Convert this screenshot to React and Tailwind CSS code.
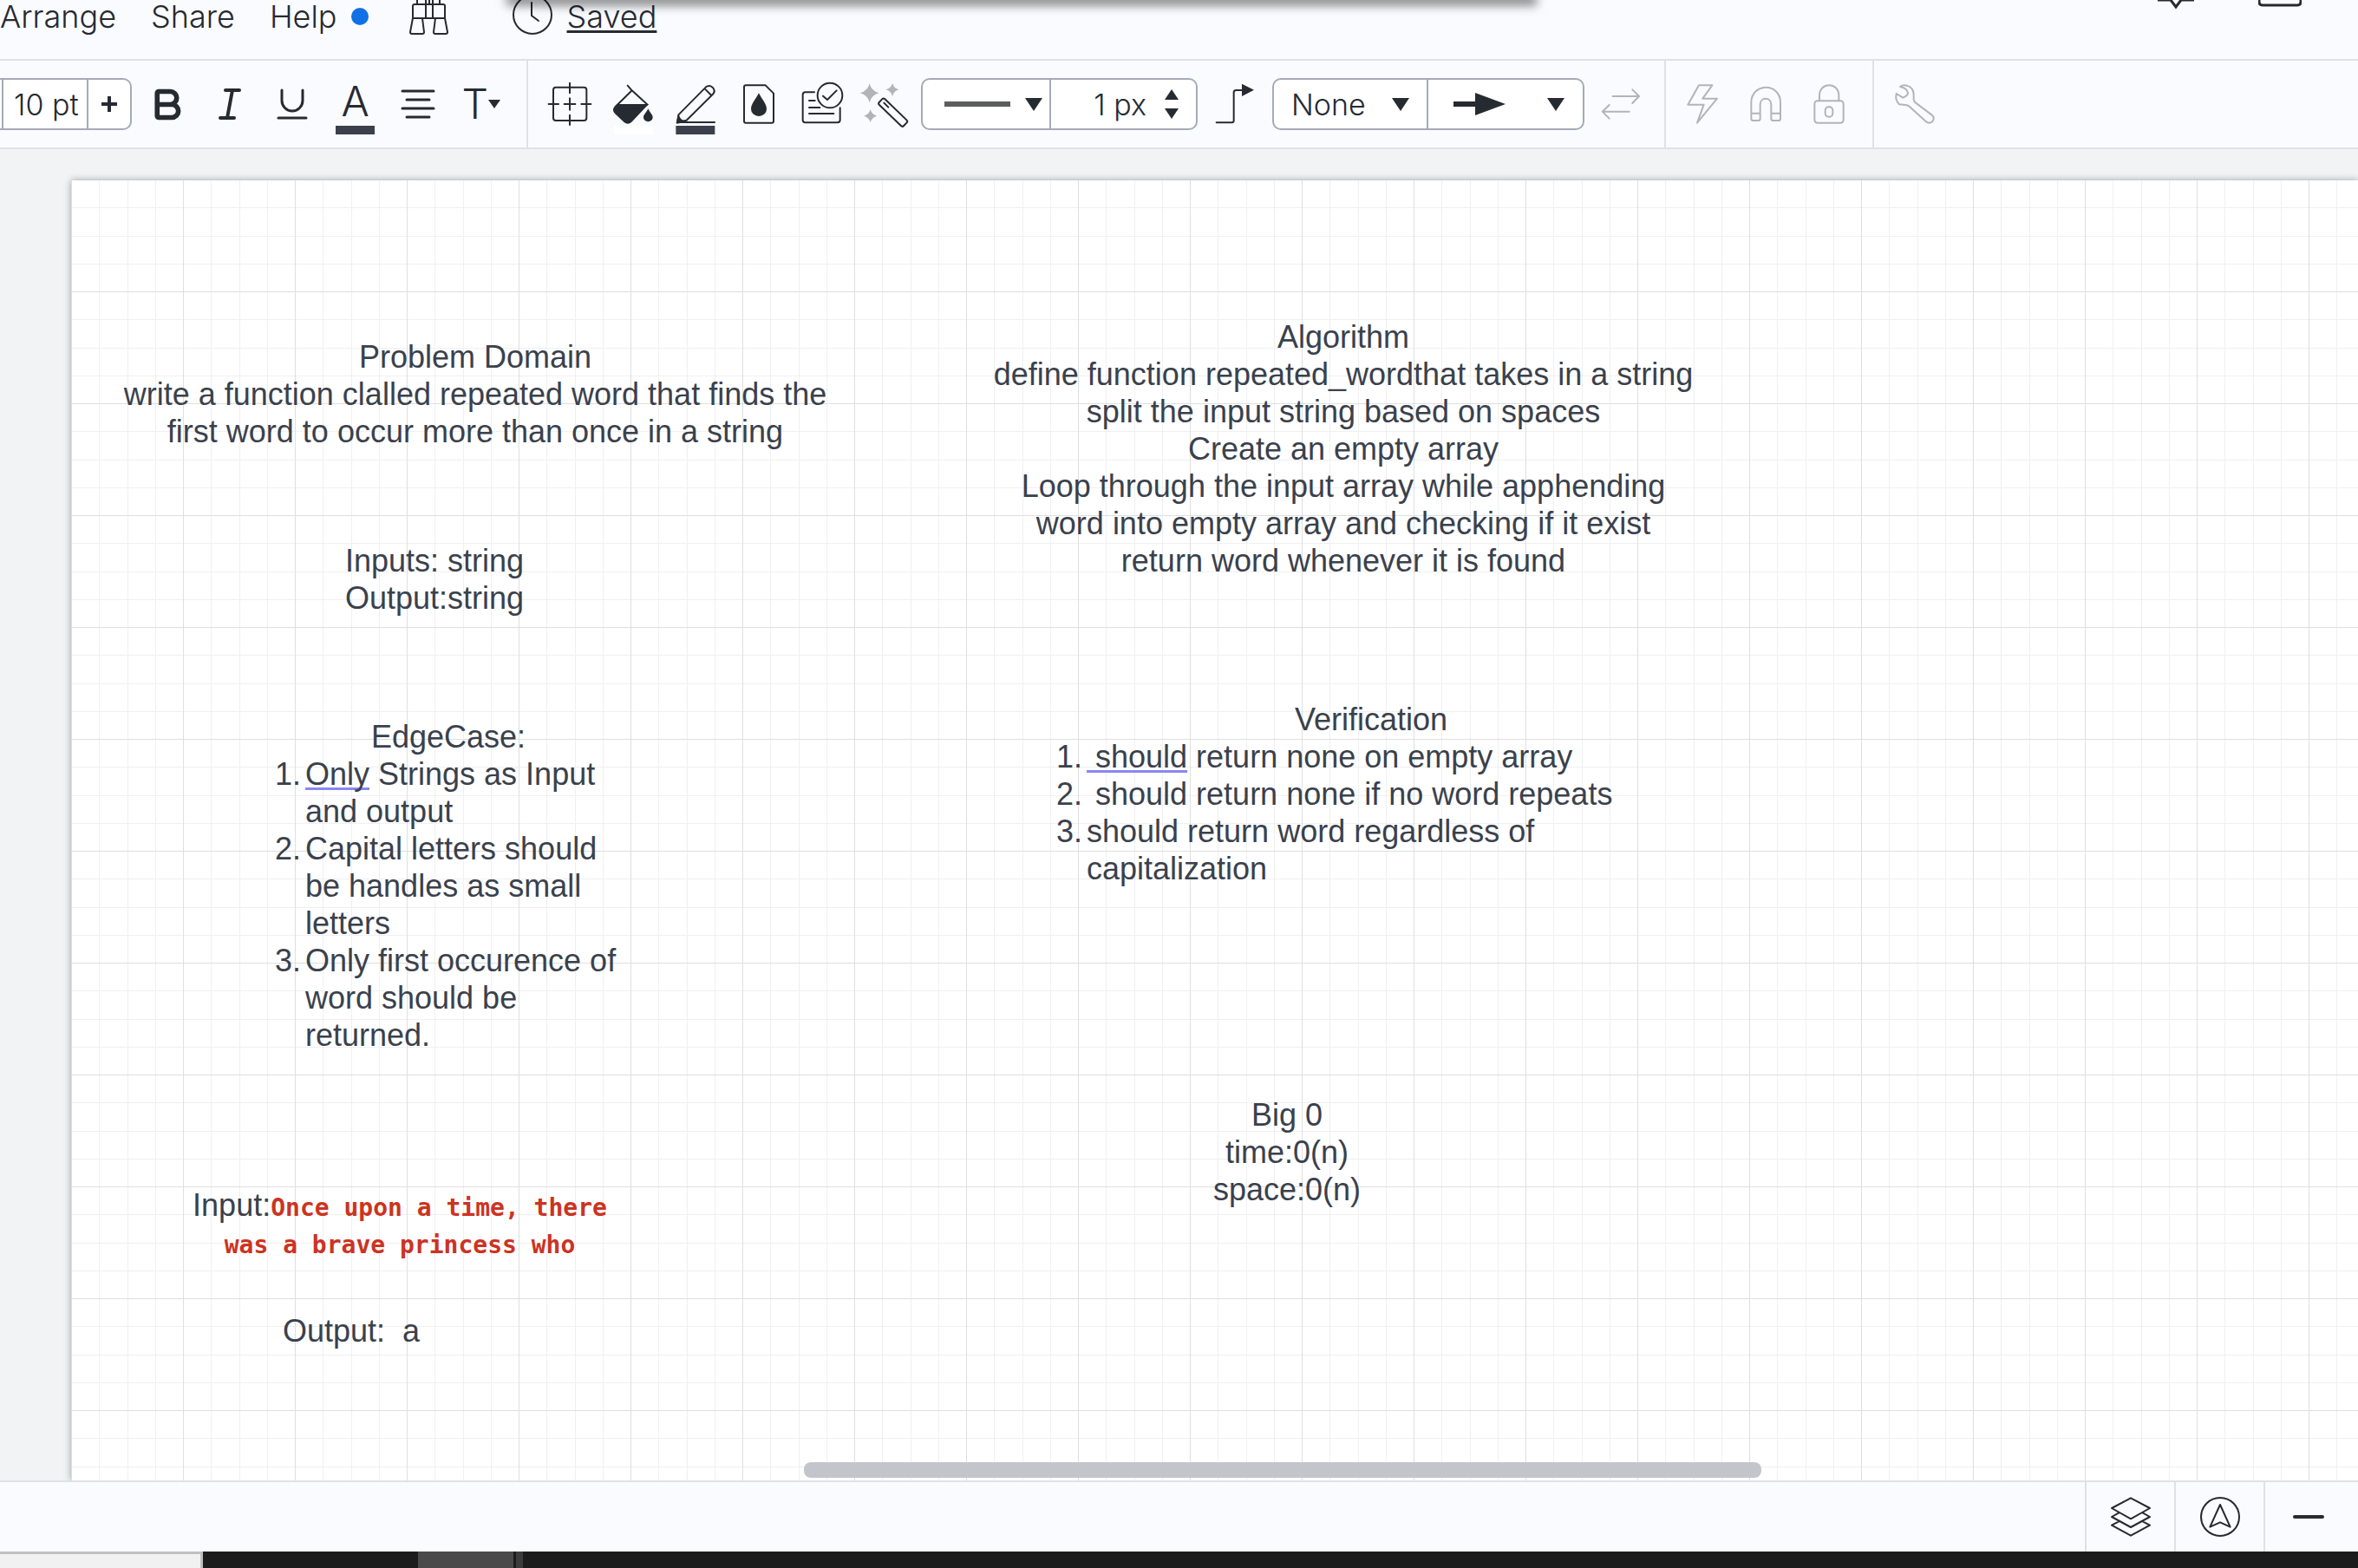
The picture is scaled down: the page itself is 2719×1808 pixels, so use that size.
import React from "react";
import { Bold, Underline } from "lucide-react";

/* Toolbar icon: 50x70 box drawn on a 3x unit grid centred on cx. */
function Icon({ cx, children, className = "text-[#262a31]" }) {
  return (
    <svg
      viewBox={`${cx - 75} 0 150 210`}
      className={`h-[70px] w-[50px] shrink-0 overflow-visible ${className}`}
      fill="none"
      stroke="currentColor"
      strokeWidth="6"
      strokeLinecap="round"
      strokeLinejoin="round"
      aria-hidden="true"
    >
      {children}
    </svg>
  );
}

function Tool({ label, disabled, children }) {
  return (
    <button
      type="button"
      aria-label={label}
      disabled={disabled}
      className="flex h-[100px] items-center justify-center"
    >
      {children}
    </button>
  );
}

function Caret({ up = false, className = "h-[15px] w-5" }) {
  return (
    <svg viewBox="0 0 20 15" preserveAspectRatio="none" className={`shrink-0 fill-[#262a31] ${className}`} aria-hidden="true">
      <path d={up ? "M0 15h20L10 0z" : "M0 0h20L10 15z"} />
    </svg>
  );
}

const star = (x, y, r) =>
  `M${x} ${y - r}Q${x + r * 0.2} ${y - r * 0.2} ${x + r} ${y}Q${x + r * 0.2} ${y + r * 0.2} ${x} ${y + r}Q${x - r * 0.2} ${y + r * 0.2} ${x - r} ${y}Q${x - r * 0.2} ${y - r * 0.2} ${x} ${y - r}Z`;

function MenuBar() {
  return (
    <header className="relative flex h-[70px] items-start border-b-2 border-[#dfe1e8] text-4xl leading-[38px] font-light text-[#262a31]">
      <nav className="flex gap-10">
        <button type="button">Arrange</button>
        <button type="button">Share</button>
        <button type="button" className="flex items-center gap-4">
          Help
          <span className="h-5 w-5 rounded-full bg-[#1071e5]" />
        </button>
      </nav>
      <button type="button" aria-label="Find" className="ml-[46px]">
        <svg width="46" height="42" viewBox="469 0 46 42" fill="none" stroke="currentColor" strokeWidth="2" strokeLinejoin="round" aria-hidden="true">
          <path d="M479 0v5M505 0v5M489 0v21M497 0v21M493 0v5M476 5h33q2 0 2 2v14h-37V7q0-2 2-2zM474 21l-3 16q0 2 2 2h12q2 0 2-2l-2-16M511 21l3 16q0 2-2 2h-12q-2 0-2-2l2-16" />
        </svg>
      </button>
      <button type="button" className="ml-[74px] flex items-start gap-[17px]">
        <svg width="46" height="40" viewBox="0 0 46 40" fill="none" stroke="currentColor" strokeWidth="2" strokeLinecap="round" aria-hidden="true">
          <circle cx="23" cy="17" r="22" />
          <path d="M22 3v15l8 6" />
        </svg>
        <span className="underline decoration-[3px] underline-offset-[3px] [text-decoration-skip-ink:none]">Saved</span>
      </button>
      <div className="mr-[65px] ml-auto flex gap-[74px]">
        <button type="button" aria-label="Comments">
          <svg width="42" height="12" viewBox="0 0 42 12" fill="none" stroke="currentColor" strokeWidth="3" aria-hidden="true">
            <path d="M0 0h15l6 8 6-8h15" />
          </svg>
        </button>
        <button type="button" aria-label="Present">
          <svg width="50" height="12" viewBox="0 0 50 12" fill="none" stroke="currentColor" strokeWidth="3" aria-hidden="true">
            <path d="M1 0v2q0 4 4 4h40q4 0 4-4V0" />
          </svg>
        </button>
      </div>
      <div className="absolute -top-2 left-[586px] h-2 w-[1184px] shadow-[0_4px_12px_2px_rgba(0,0,0,0.5)]" />
    </header>
  );
}

function Toolbar() {
  return (
    <div role="toolbar" className="flex h-[102px] items-center border-b-2 border-[#dfe1e8] text-[34px] font-light text-[#262a31]">
      <div className="flex h-[60px] w-[152px] rounded-r-[10px] border-y-2 border-r-2 border-[#a4abb7] bg-white pl-[2px]">
        <input
          aria-label="Font size"
          defaultValue="10 pt"
          className="w-[98px] border-l-2 border-[#a4abb7] pl-3 text-[34px] outline-none"
        />
        <button type="button" aria-label="Increase font size" className="flex flex-1 items-center justify-center border-l-2 border-[#a4abb7]">
          <svg width="18" height="18" viewBox="0 0 18 18" stroke="currentColor" strokeWidth="4" aria-hidden="true">
            <path d="M0 9h18M9 0v18" />
          </svg>
        </button>
      </div>

      <div className="mr-[8px] ml-1 grid w-[435px] grid-cols-6">
        <Tool label="Bold">
          <Bold size={45} strokeWidth={3} />
        </Tool>
        <Tool label="Italic">
          <svg width="26" height="36" viewBox="0 0 26 36" stroke="currentColor" strokeWidth="4" strokeLinecap="round" aria-hidden="true">
            <line x1="8" y1="2" x2="24" y2="2" />
            <line x1="2" y1="34" x2="18" y2="34" />
            <line x1="16" y1="2" x2="10" y2="34" />
          </svg>
        </Tool>
        <Tool label="Underline">
          <Underline size={48} strokeWidth={1} className="stroke-[1.5]" />
        </Tool>
        <Tool label="Text colour">
          <span className="flex h-[70px] w-[45px] flex-col items-center justify-end border-b-10 border-[#3a414c] text-5xl leading-[56px]">
            A
          </span>
        </Tool>
        <Tool label="Align text">
          <svg width="40" height="34" viewBox="0 0 40 34" stroke="currentColor" strokeWidth="3" strokeLinecap="round" aria-hidden="true">
            <path d="M2 2h36M7 12h26M2 22h36M7 32h26" />
          </svg>
        </Tool>
        <Tool label="Text options">
          <span className="text-5xl">T</span>
          <Caret className="h-[10px] w-[14px]" />
        </Tool>
      </div>

      <div className="ml-2 h-[100px] border-l-2 border-[#dfe1e8]" />

      <div className="mr-[6px] ml-3 grid w-[435px] grid-cols-6">
        <Tool label="Shape options">
          <Icon cx={171}>
            <rect x="114" y="47" width="115" height="115" rx="9" />
            <path d="M171 32v35M171 85v40M171 143v34M98 105h34M152 105h38M211 105h33" />
          </Icon>
        </Tool>
        <Tool label="Fill colour">
          <Icon cx={387}>
            <rect x="321" y="180" width="135" height="30" fill="white" stroke="none" />
            <path d="M368 41L383 58L332 108M383 58L437 107" />
            <path d="M331 105H441L382 167Q369 179 355 167L324 138Q312 126 324 112Z" fill="currentColor" stroke="none" />
            <path d="M439 121C446 136 455 141 455 151A16 15 0 0 1 423 151C423 141 432 136 439 121Z" fill="currentColor" stroke="none" />
          </Icon>
        </Tool>
        <Tool label="Line colour">
          <Icon cx={605}>
            <rect x="537" y="180" width="135" height="30" fill="#3a414c" stroke="none" />
            <path d="M543 168L546 142L641 46Q652 37 664 47Q675 59 666 70L574 161L543 168H671M638 53L660 75" />
            <path d="M541 170L546 146Q550 160 565 165Z" fill="currentColor" />
          </Icon>
        </Tool>
        <Tool label="Shape opacity">
          <Icon cx={822}>
            <path d="M777 40H845L873 68V164Q873 170 867 170H777Q771 170 771 164V46Q771 40 777 40Z" />
            <path d="M822 67C832 88 849 104 849 122A27 25 0 0 1 795 122C795 104 812 88 822 67Z" fill="currentColor" stroke="none" />
          </Icon>
        </Tool>
        <Tool label="Rules">
          <Icon cx={1041}>
            <path d="M1017 64H986Q977 64 977 73V160Q977 169 986 169H1097Q1106 169 1106 160V118" />
            <circle cx="1071" cy="75" r="43" />
            <path d="M1047 77L1062 90L1094 58M999 93H1019M999 117H1036M999 138H1084" />
          </Icon>
        </Tool>
        <Tool label="Magic format">
          <Icon cx={1257}>
            <g fill="#b3b4b7" stroke="none">
              <path d={star(1205, 67, 33)} />
              <path d={star(1284, 55, 23)} />
              <path d={star(1208, 146, 23)} />
            </g>
            <rect x="-59" y="-14" width="118" height="28" rx="7" transform="translate(1286 134) rotate(44)" />
            <path d="M1255 101L1270 116" />
          </Icon>
        </Tool>
      </div>

      <div className="flex h-[60px] rounded-[10px] border-2 border-[#a4abb7] bg-white">
        <button type="button" aria-label="Line style" className="flex w-[146px] items-center justify-between pr-2 pl-[25px]">
          <span className="h-[6px] w-[76px] bg-[#5c5d5d]" />
          <Caret />
        </button>
        <label className="flex w-[169px] items-center border-l-2 border-[#a4abb7] pr-5">
          <input aria-label="Line width" defaultValue="1 px" className="w-0 flex-1 pr-[21px] text-right outline-none" />
          <span className="flex flex-col gap-[10px]">
            <Caret up className="h-3 w-4" />
            <Caret className="h-3 w-4" />
          </span>
        </label>
      </div>

      <button type="button" aria-label="Line shape" className="mx-[17px] flex h-[100px] w-[52px] items-center justify-center">
        <Icon cx={162}>
          <path d="M98 169H151Q158 169 158 162V65Q158 57 166 57H186" />
          <path d="M186 35L228 56L186 78Z" fill="currentColor" stroke="none" />
        </Icon>
      </button>

      <div className="flex h-[60px] rounded-[10px] border-2 border-[#a4abb7] bg-white">
        <div className="relative flex w-[176px]">
          <select aria-label="Line start" className="w-full appearance-none bg-transparent pl-5 outline-none">
            <option>None</option>
          </select>
          <span className="pointer-events-none absolute inset-y-0 right-5 flex items-center">
            <Caret />
          </span>
        </div>
        <button type="button" aria-label="Line end" className="flex w-[180px] items-center justify-between border-l-2 border-[#a4abb7] pr-[21px] pl-[29px]">
          <svg width="60" height="26" viewBox="0 0 60 26" fill="currentColor" aria-hidden="true">
            <path d="M0 10h25V0l35 13-35 13V16H0z" />
          </svg>
          <Caret />
        </button>
      </div>

      <div className="ml-[6px] flex w-[72px] justify-center">
        <Tool label="Swap ends" disabled>
          <Icon cx={1497} className="text-[#b3b4b7]">
            <path d="M1469 78H1558M1537 55L1560 78L1537 102M1526 131H1435M1457 108L1433 131L1457 155" />
          </Icon>
        </Tool>
      </div>

      <div className="ml-[14px] h-[100px] border-l-2 border-[#dfe1e8]" />

      <div className="ml-[6px] grid w-[218px] grid-cols-3">
        <Tool label="Actions" disabled>
          <Icon cx={192} className="text-[#b3b4b7]">
            <path d="M180 40H226L193 86H243L174 170L197 107H142Z" />
          </Icon>
        </Tool>
        <Tool label="Snap" disabled>
          <Icon cx={411} className="text-[#b3b4b7]">
            <path d="M361 155V100C361 30 462 30 462 100V155Q462 162 455 162H437Q430 162 430 155V106C430 80 392 80 392 106V155Q392 162 385 162H368Q361 162 361 155ZM361 137H392M430 137H462" />
          </Icon>
        </Tool>
        <Tool label="Lock" disabled>
          <Icon cx={627} className="text-[#b3b4b7]">
            <rect x="577" y="94" width="100" height="76" rx="10" />
            <path d="M594 94V76C594 28 661 28 661 76V94" />
            <rect x="614" y="115" width="26" height="34" rx="12" />
          </Icon>
        </Tool>
      </div>

      <div className="ml-[14px] h-[100px] border-l-2 border-[#dfe1e8]" />

      <div className="ml-[11px] flex w-[72px] justify-center">
        <Tool label="Settings" disabled>
          <Icon cx={927} className="text-[#b3b4b7]">
            <path d="M876 45Q885 38 899 41Q922 48 923 70V90Q924 97 934 104L985 142Q998 154 988 165Q977 175 965 165L908 113Q900 107 893 108L873 106Q858 92 863 69L886 83Q902 76 903 67Q902 51 876 45Z" />
          </Icon>
        </Tool>
      </div>
    </div>
  );
}

function Note({ className, children }) {
  return <section className={`absolute text-center ${className}`}>{children}</section>;
}

function Steps({ items }) {
  return (
    <ol className="text-left">
      {items.map((item, i) => (
        <li key={i} className="flex">
          <span className="w-[35px] shrink-0">{i + 1}.</span>
          <span className="whitespace-pre-wrap">{item}</span>
        </li>
      ))}
    </ol>
  );
}

function Flagged({ children }) {
  return (
    <span className="underline decoration-[#8a86f5] decoration-[3px] underline-offset-[3px] [text-decoration-skip-ink:none]">
      {children}
    </span>
  );
}

function Canvas() {
  return (
    <main className="relative flex flex-1 overflow-hidden bg-[#f1f3f5] pt-9 pl-[82px]">
      <div className="relative flex-1 bg-white bg-[linear-gradient(to_right,#dedfe0_1px,transparent_1px),linear-gradient(to_bottom,#dedfe0_1px,transparent_1px),linear-gradient(to_right,transparent_32px,#f0f0f1_32px,#f0f0f1_33px,transparent_33px,transparent_65px,#f0f0f1_65px,#f0f0f1_66px,transparent_66px,transparent_97px,#f0f0f1_97px,#f0f0f1_98px,transparent_98px),linear-gradient(to_bottom,transparent_32px,#f0f0f1_32px,#f0f0f1_33px,transparent_33px,transparent_65px,#f0f0f1_65px,#f0f0f1_66px,transparent_66px,transparent_97px,#f0f0f1_97px,#f0f0f1_98px,transparent_98px)] bg-[length:129px_129px] bg-[position:0px_-1px] font-['Liberation_Sans',Arial,sans-serif] text-4xl leading-[43px] text-[#3a414c] shadow-[0_0_8px_rgba(0,0,0,0.35)]">
        <Note className="top-[182px] left-[51px] w-[830px]">
          <h2>Problem Domain</h2>
          <p>write a function clalled repeated word that finds the first word to occur more than once in a string</p>
        </Note>
        <Note className="top-[417px] left-[269px] w-[300px]">
          <p>Inputs: string</p>
          <p>Output:string</p>
        </Note>
        <Note className="top-[620px] left-[235px] w-[400px]">
          <h2>EdgeCase:</h2>
          <Steps
            items={[
              <><Flagged>Only</Flagged> Strings as Input and output</>,
              "Capital letters should be handles as small letters",
              "Only first occurence of word should be returned.",
            ]}
          />
        </Note>
        <Note className="top-[1160px] left-[129px] w-[500px]">
          <p>
            Input:
            <code className="font-['DejaVu_Sans_Mono',monospace] text-[28px] leading-none font-bold text-[#cc3322]">
              Once upon a time, there was a brave princess who
            </code>
          </p>
        </Note>
        <Note className="top-[1305px] left-[223px] w-[200px]">
          <p className="whitespace-pre">{"Output:  a"}</p>
        </Note>
        <Note className="top-[159px] left-[1062px] w-[810px]">
          <h2>Algorithm</h2>
          <p>define function repeated_wordthat takes in a string</p>
          <p>split the input string based on spaces</p>
          <p>Create an empty array</p>
          <p>Loop through the input array while apphending word into empty array and checking if it exist</p>
          <p>return word whenever it is found</p>
        </Note>
        <Note className="top-[600px] left-[1136px] w-[726px]">
          <h2>Verification</h2>
          <Steps
            items={[
              <><Flagged>{" should"}</Flagged> return none on empty array</>,
              " should return none if no word repeats",
              "should return word regardless of capitalization",
            ]}
          />
        </Note>
        <Note className="top-[1056px] left-[1302px] w-[200px]">
          <h2>Big 0</h2>
          <p>time:0(n)</p>
          <p>space:0(n)</p>
        </Note>
      </div>
      <div className="absolute bottom-[3px] left-[34.1%] h-[18px] w-[40.6%] rounded-lg bg-[#c4c5cc]" />
    </main>
  );
}

function StatusBar() {
  const stroke = { fill: "none", stroke: "currentColor", strokeWidth: 6, strokeLinecap: "round", strokeLinejoin: "round", "aria-hidden": true };
  const cell = "flex w-[103px] items-center justify-center border-l-2 border-[#dfe1e8]";
  return (
    <footer className="flex h-[82px] justify-end border-t-2 border-[#dde2e8] text-[#262a31]">
      <button type="button" aria-label="Layers" className={cell}>
        <svg width="48" height="48" viewBox="399 258 144 144" {...stroke}>
          <path d="M471 265L537 300L471 337L405 300ZM430 316L405 330L471 366L537 330L512 316M430 346L405 359L471 395L537 359L512 346" />
        </svg>
      </button>
      <button type="button" aria-label="Navigator" className={cell}>
        <svg width="48" height="48" viewBox="705 258 144 144" {...stroke}>
          <circle cx="777" cy="330" r="66" />
          <path d="M777 288L812 365L777 349L742 365Z" />
        </svg>
      </button>
      <button type="button" aria-label="Zoom out" className="flex w-[109px] items-center justify-center border-l-2 border-[#dfe1e8] pr-2">
        <span className="h-1 w-9 rounded-full bg-[#262a31]" />
      </button>
    </footer>
  );
}

export default function App() {
  return (
    <div className="flex min-h-screen flex-col overflow-hidden bg-[#fafbfe] font-[Inter,sans-serif]">
      <MenuBar />
      <Toolbar />
      <Canvas />
      <StatusBar />
      <div className="flex h-[19px] bg-[#1c1c1c]">
        <div className="w-[234px] border-t-3 border-r-3 border-[#bfc0c0] bg-[#f1f1f1]" />
        <div className="ml-[248px] w-[110px] bg-[#4a4a4a]" />
        <div className="ml-[3px] w-2 bg-[#3c3c3c]" />
      </div>
    </div>
  );
}
